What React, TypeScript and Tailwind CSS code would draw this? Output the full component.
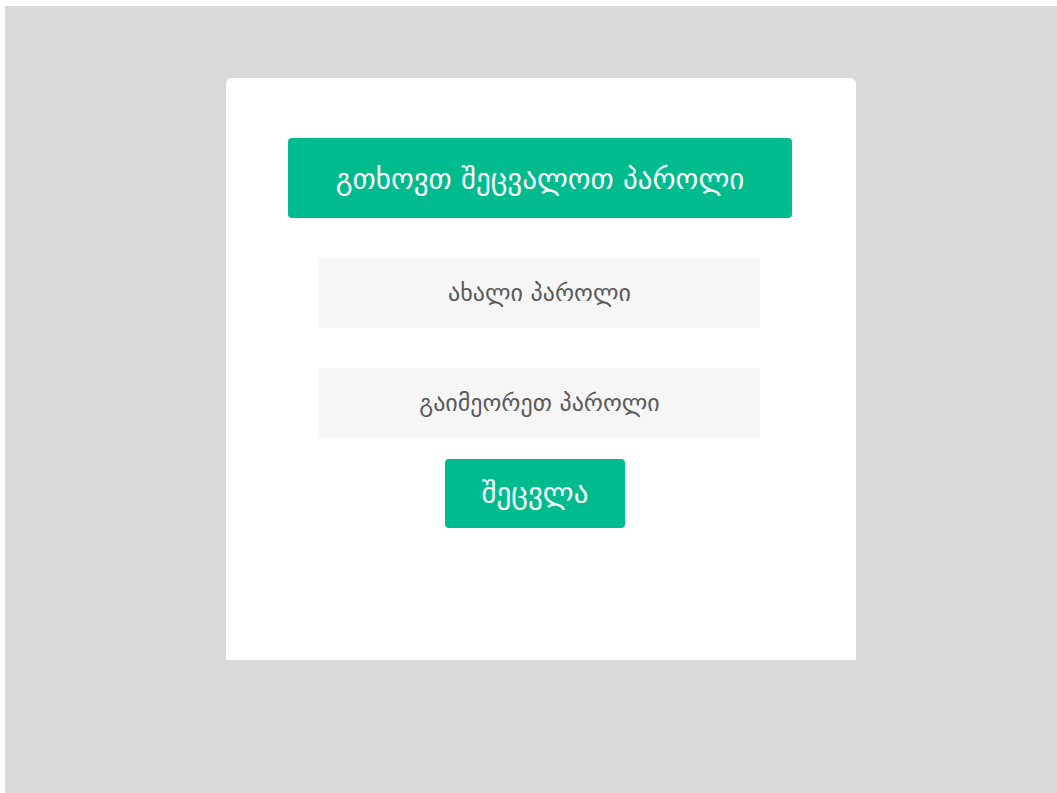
export default function App() {
  return (
    <div className="h-screen w-full bg-white pl-[5px] pt-[6px]">
      <div className="h-full w-full overflow-hidden bg-[#d9d9d9] pt-[72px] pl-[221px]">
        <div className="flex h-[582px] w-[630px] flex-col items-start rounded-t-md bg-white pt-[60px] font-['DejaVu_Sans',sans-serif]">
          <div className="ml-[62px] flex h-[80px] w-[504px] items-center justify-center rounded bg-[#00bb8d] pt-[3px] text-[29px] text-white">
            გთხოვთ შეცვალოთ პაროლი
          </div>
          <input
            type="password"
            placeholder="ახალი პაროლი"
            className="ml-[93px] mt-[40px] h-[70px] w-[441px] bg-[#f6f6f6] text-center text-[24px] text-[#555] outline-none placeholder:text-[#5a5a5a]"
          />
          <input
            type="password"
            placeholder="გაიმეორეთ პაროლი"
            className="ml-[93px] mt-[40px] h-[70px] w-[441px] bg-[#f6f6f6] text-center text-[24px] text-[#555] outline-none placeholder:text-[#5a5a5a]"
          />
          <button
            type="button"
            className="ml-[219px] mt-[21px] h-[69px] w-[180px] rounded bg-[#00bb8d] text-[29px] text-white"
          >
            შეცვლა
          </button>
        </div>
      </div>
    </div>
  );
}
